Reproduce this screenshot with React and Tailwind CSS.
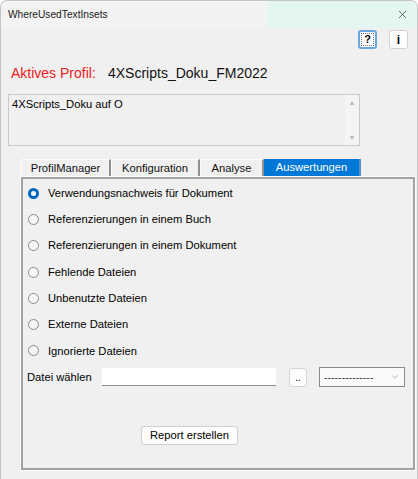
import React from 'react';
import { X, ChevronDown } from 'lucide-react';

const options = [
  'Verwendungsnachweis für Dokument',
  'Referenzierungen in einem Buch',
  'Referenzierungen in einem Dokument',
  'Fehlende Dateien',
  'Unbenutzte Dateien',
  'Externe Dateien',
  'Ignorierte Dateien',
];

const tabs = [
  { label: 'ProfilManager', w: 'w-[90px]' },
  { label: 'Konfiguration', w: 'w-[89px]' },
  { label: 'Analyse', w: 'w-[64px]' },
];

function Radio({ checked }) {
  if (checked) {
    return <span className="w-[11px] h-[11px] rounded-full border-[3px] border-[#0067c0] bg-white shrink-0" />;
  }
  return <span className="w-[11px] h-[11px] rounded-full border border-[#8a8a8a] bg-[#f6f6f6] shrink-0" />;
}

export default function App() {
  return (
    <div className="w-[418px] h-[479px] bg-[#f0f0f0] border-x border-t border-[#c4c4c4] rounded-t-[7px] overflow-hidden font-['Liberation_Sans',Arial,sans-serif] text-[11.2px] text-black">
      {/* title bar */}
      <div className="h-[27px] flex items-center justify-between pl-[7px] pr-[8px] bg-gradient-to-r from-[#f3f3f3] from-64% to-[#e4f6f1] to-64%">
        <span className="text-[10.2px] text-[#1a1a1a]">WhereUsedTextInsets</span>
        <X size={13} strokeWidth={1.3} className="text-[#333]" />
      </div>

      {/* help / info */}
      <div className="flex justify-end gap-[12px] pr-[9px] mt-[2px]">
        <button className="w-[19px] h-[19px] rounded-[3px] border-2 border-[#6aa6e0] bg-white flex items-center justify-center p-0">
          <span className="w-[13px] h-[13px] border border-dotted border-[#777] flex items-center justify-center text-[11px] font-bold leading-none">?</span>
        </button>
        <button className="w-[19px] h-[19px] rounded-[3px] border border-[#d2d2d2] bg-[#fdfdfd] flex items-center justify-center text-[12px] font-bold leading-none">
          i
        </button>
      </div>

      {/* aktives profil */}
      <div className="flex items-center h-[18px] mt-[15px] pl-[10px] text-[14px] leading-[18px]">
        <span className="text-[#f0201c] w-[97px]">Aktives Profil:</span>
        <span className="text-[#111]">4XScripts_Doku_FM2022</span>
      </div>

      {/* textarea */}
      <div className="ml-[7px] mt-[12px] w-[352px] h-[52px] border border-[#c9c9c9] flex">
        <div className="flex-1 pl-[3px] pt-[2px] leading-[14px]">4XScripts_Doku auf O</div>
        <div className="w-[14px] bg-[#f4f4f4] flex flex-col justify-between items-center py-[4px] text-[7px] text-[#b5b5b5] leading-none">
          <span>▲</span>
          <span>▼</span>
        </div>
      </div>

      {/* tabs */}
      <div className="flex ml-[20px] mt-[13px] h-[17px]">
        {tabs.map((t) => (
          <div
            key={t.label}
            className={`${t.w} h-full flex items-center justify-center border-t border-l border-[#fbfbfb] border-r-2 border-r-[#8f8f8f] text-[#111]`}
          >
            {t.label}
          </div>
        ))}
        <div className="w-[97px] h-full flex items-center justify-center bg-[#0078d7] text-white border-r-2 border-[#5a8fc8]">
          Auswertungen
        </div>
      </div>

      {/* panel */}
      <div className="ml-[19px] w-[396px] h-[295px] border border-[#fbfbfb]">
        <div className="w-full h-full border-2 border-[#a3a3a3] flex flex-col">
          <div className="flex flex-col pl-[5px] pt-[1px]">
            {options.map((o, i) => (
              <div key={o} className="h-[26.3px] flex items-center gap-[9px]">
                <Radio checked={i === 0} />
                <span>{o}</span>
              </div>
            ))}
          </div>

          <div className="flex items-center h-[20px] mt-[3px] pl-[4px]">
            <span className="w-[75px]">Datei wählen</span>
            <div className="w-[174px] h-[18px] bg-white border-b border-[#8c8c8c]" />
            <button className="ml-[13px] w-[18px] h-[19px] bg-[#fcfcfc] border border-[#d4d4d4] rounded-[3px] flex items-end justify-center pb-[3px] text-[10px] leading-none">
              ..
            </button>
            <div className="ml-[12px] w-[86px] h-[20px] bg-[#fafafa] border border-[#8a8a8a] flex items-center justify-between pl-[4px] pr-[4px]">
              <span className="text-[10px] tracking-[0.2px] text-[#333]">--------------</span>
              <ChevronDown size={10} strokeWidth={1.3} className="text-[#777]" />
            </div>
          </div>

          <div className="flex pl-[118px] mt-[39px]">
            <button className="w-[97px] h-[19px] bg-[#fdfdfd] border border-[#d0d0d0] rounded-[3px] flex items-center justify-center">
              Report erstellen
            </button>
          </div>
        </div>
      </div>
    </div>
  );
}
